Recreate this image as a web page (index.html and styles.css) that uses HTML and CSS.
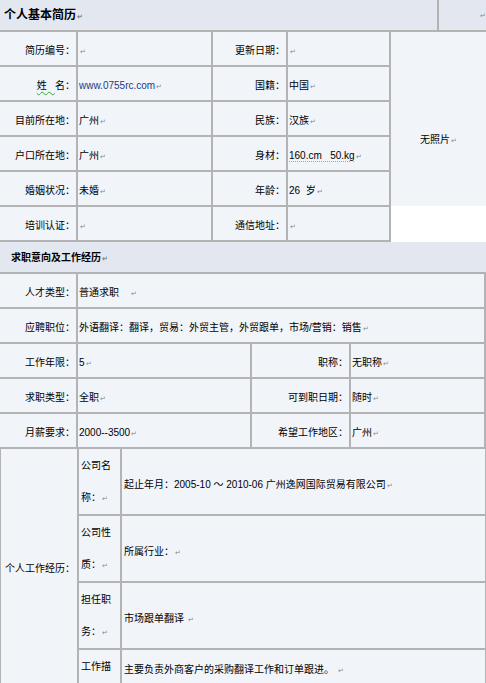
FILE: index.html
```html
<!DOCTYPE html>
<html lang="zh-CN">
<head>
<meta charset="utf-8">
<title>个人基本简历</title>
<link rel="stylesheet" href="styles.css">
</head>
<body>
<div class="page">
  <div class="title-bar">
    <div class="title-main">个人基本简历<span class="pm">↵</span></div>
    <div class="title-side"><span class="pm">↵</span></div>
  </div>

  <table class="t t1">
    <colgroup>
      <col class="w78"><col class="w135"><col class="w75"><col class="w103"><col class="w95">
    </colgroup>
    <tr>
      <td class="lb">简历编号：</td>
      <td class="vl"><span class="pm">↵</span></td>
      <td class="lb">更新日期：</td>
      <td class="vl"><span class="pm">↵</span></td>
      <td class="photo" rowspan="6">无照片<span class="pm">↵</span></td>
    </tr>
    <tr>
      <td class="lb"><span class="spell">姓&nbsp;&nbsp;&nbsp;</span>名：</td>
      <td class="vl"><span class="link">www.0755rc.com</span><span class="pm">↵</span></td>
      <td class="lb">国籍：</td>
      <td class="vl">中国<span class="pm">↵</span></td>
    </tr>
    <tr>
      <td class="lb">目前所在地：</td>
      <td class="vl">广州<span class="pm">↵</span></td>
      <td class="lb">民族：</td>
      <td class="vl">汉族<span class="pm">↵</span></td>
    </tr>
    <tr>
      <td class="lb">户口所在地：</td>
      <td class="vl">广州<span class="pm">↵</span></td>
      <td class="lb">身材：</td>
      <td class="vl"><span class="dots">160.cm&nbsp;&nbsp;&nbsp;50.kg</span><span class="pm">↵</span></td>
    </tr>
    <tr>
      <td class="lb">婚姻状况：</td>
      <td class="vl">未婚<span class="pm">↵</span></td>
      <td class="lb">年龄：</td>
      <td class="vl">26&nbsp;&nbsp;岁<span class="pm">↵</span></td>
    </tr>
    <tr>
      <td class="lb">培训认证：</td>
      <td class="vl"><span class="pm">↵</span></td>
      <td class="lb">通信地址：</td>
      <td class="vl"><span class="pm">↵</span></td>
    </tr>
  </table>

  <div class="sec-bar">求职意向及工作经历<span class="pm">↵</span></div>

  <table class="t t2">
    <colgroup>
      <col class="w78"><col class="w174"><col class="w99"><col class="w135b">
    </colgroup>
    <tr>
      <td class="lb">人才类型：</td>
      <td class="vl" colspan="3">普通求职&nbsp;&nbsp;&nbsp;&nbsp;<span class="pm">↵</span></td>
    </tr>
    <tr>
      <td class="lb">应聘职位：</td>
      <td class="vl" colspan="3">外语翻译：翻译，贸易：外贸主管，外贸跟单，市场/营销：销售<span class="pm">↵</span></td>
    </tr>
    <tr>
      <td class="lb">工作年限：</td>
      <td class="vl">5<span class="pm">↵</span></td>
      <td class="lb">职称：</td>
      <td class="vl">无职称<span class="pm">↵</span></td>
    </tr>
    <tr>
      <td class="lb">求职类型：</td>
      <td class="vl">全职<span class="pm">↵</span></td>
      <td class="lb">可到职日期：</td>
      <td class="vl">随时<span class="pm">↵</span></td>
    </tr>
    <tr>
      <td class="lb">月薪要求：</td>
      <td class="vl">2000--3500<span class="pm">↵</span></td>
      <td class="lb">希望工作地区：</td>
      <td class="vl">广州<span class="pm">↵</span></td>
    </tr>
  </table>

  <table class="t t3">
    <colgroup>
      <col class="w78"><col class="w43"><col class="w365">
    </colgroup>
    <tr>
      <td class="lb exp" rowspan="4">个人工作经历：</td>
      <td class="sub">公司名称：<span class="pm">↵</span></td>
      <td class="vl txt">起止年月：2005-10 ～ 2010-06 广州逸网国际贸易有限公司<span class="pm">↵</span></td>
    </tr>
    <tr>
      <td class="sub">公司性质：<span class="pm">↵</span></td>
      <td class="vl txt">所属行业：<span class="pm">↵</span></td>
    </tr>
    <tr>
      <td class="sub">担任职务：<span class="pm">↵</span></td>
      <td class="vl txt">市场跟单翻译&nbsp;<span class="pm">↵</span></td>
    </tr>
    <tr>
      <td class="sub">工作描述：<span class="pm">↵</span></td>
      <td class="vl txt top">主要负责外商客户的采购翻译工作和订单跟进。&nbsp;<span class="pm">↵</span></td>
    </tr>
  </table>
</div>
</body>
</html>
```

FILE: styles.css
```css
html, body {
  margin: 0;
  padding: 0;
  background: #ffffff;
}

body {
  font-family: "Liberation Sans", "Noto Sans CJK SC", sans-serif;
  font-size: 10px;
  color: #000000;
  overflow: hidden;
}

.page {
  width: 486px;
  overflow: hidden;
}

.pm {
  font-size: 7px;
  line-height: 0;
  color: #8a8a8a;
  margin-left: 1px;
}

.title-bar {
  display: flex;
  height: 30px;
  background: #e3e8f0;
  border-bottom: 2px solid #b3b3b3;
}

.title-main {
  width: 433px;
  padding-left: 4px;
  font-size: 12px;
  font-weight: bold;
  line-height: 30px;
  border-right: 2px solid #b3b3b3;
}

.title-side {
  flex: 1;
  text-align: right;
  line-height: 30px;
}

.t {
  border-collapse: separate;
  border-spacing: 0;
  table-layout: fixed;
  width: 486px;
}

.t td {
  background: #f1f4f9;
  border-right: 2px solid #b3b3b3;
  border-bottom: 2px solid #b3b3b3;
  padding: 4px 0 0 0;
  height: 33px;
  box-sizing: border-box;
  line-height: 29px;
  vertical-align: middle;
  white-space: nowrap;
  overflow: hidden;
}

.w78 { width: 78px; }
.w135 { width: 135px; }
.w75 { width: 75px; }
.w103 { width: 103px; }
.w95 { width: 95px; }
.w174 { width: 174px; }
.w99 { width: 99px; }
.w135b { width: 135px; }
.w43 { width: 43px; }
.w365 { width: 365px; }

.t .lb {
  text-align: right;
  padding-right: 1px;
}

.t .vl {
  text-align: left;
  padding-left: 1px;
}

.t1 .photo {
  text-align: center;
  border-right: none;
  border-bottom: none;
  background: linear-gradient(#f1f4f9 0, #f1f4f9 174px, #ffffff 174px);
  padding-top: 4px;
}

.spell {
  text-decoration: underline wavy #3aa63a;
  text-decoration-thickness: 1px;
  text-underline-offset: 2px;
}

.link {
  color: #1c3a86;
}

.dots {
  text-decoration: underline dotted #c98ac9;
  text-underline-offset: 2px;
}

.sec-bar {
  height: 30px;
  line-height: 32px;
  background: #e3e8f0;
  border-bottom: 2px solid #b3b3b3;
  padding-left: 11px;
  font-weight: bold;
}

.t3 {
  border-left: 1px solid #b3b3b3;
}

.t3 td {
  white-space: normal;
}

.t3 .exp {
  padding-top: 1px;
  padding-bottom: 28px;
  padding-right: 2px;
  line-height: 32px;
}

.t3 .sub {
  padding: 1px 6px 0 2px;
  line-height: 32px;
  text-align: left;
  word-break: break-all;
}

.t3 .txt {
  padding-left: 2px;
  padding-top: 6px;
  line-height: 32px;
}

.t3 .top {
  vertical-align: top;
  padding-top: 4px;
}
```
